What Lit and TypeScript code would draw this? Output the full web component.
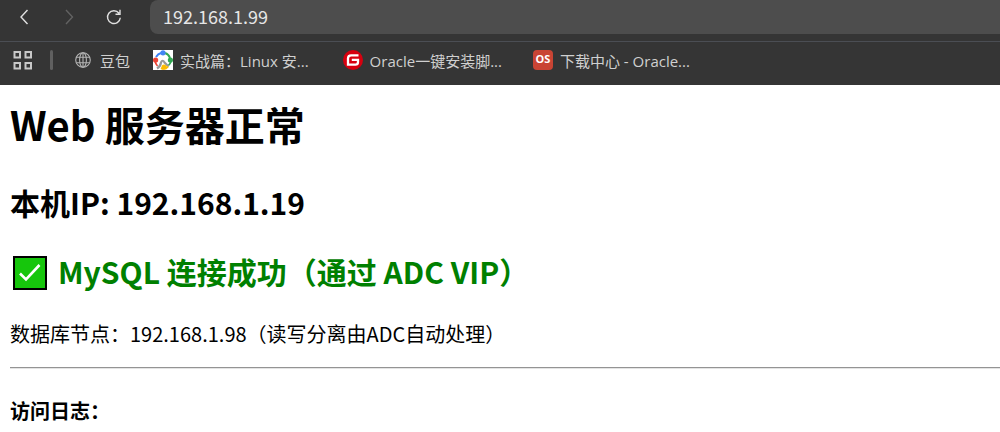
import { LitElement, html, css, svg } from "lit";
import { customElement } from "lit/decorators.js";

const globeIcon = svg`<svg width="16" height="16" viewBox="0 0 16 16" fill="none" stroke="#b4b4b4" stroke-width="1.1">
  <circle cx="8" cy="8" r="7.3"/><ellipse cx="8" cy="8" rx="3.4" ry="7.3"/><path d="M8 .7v14.6M1.3 5.2h13.4M1.3 10.8h13.4"/></svg>`;

const peopleIcon = svg`<svg width="20" height="20" viewBox="0 0 20 20" fill="none">
  <path fill="#fff" d="M0 0h20v20H0z"/>
  <path d="M3 7Q5 3.600 8 3" stroke="#3b82f6" stroke-width="2"/>
  <path d="M12 3Q15.500 4 17 8" stroke="#34a853" stroke-width="2"/>
  <circle cx="10" cy="2.800" r="2.600" fill="#4285f4"/>
  <circle cx="2.600" cy="10" r="2.600" fill="#ea4335"/><path d="M2 11q.5 3 2.500 5" stroke="#ea4335" stroke-width="1.600"/>
  <circle cx="17.400" cy="10" r="2.600" fill="#34a853"/><path d="M18 11q-.5 3-3 5" stroke="#34a853" stroke-width="1.600"/>
  <path d="M4 18.500q3.500-2 4-6 1.500-3.500 3.500 0l4 4" stroke="#999" stroke-width="2.200"/>
  <path d="M8 18q4 2 7-1.500" stroke="#fbbc05" stroke-width="2"/><circle cx="11" cy="17" r="2.500" fill="#fbbc05"/></svg>`;

const giteeIcon = svg`<svg width="20" height="20" viewBox="0 0 20 20" fill="none">
  <circle cx="10" cy="10" r="10" fill="#d7000f"/>
  <path d="M15.500 5.300H8.200Q5 5.300 5 8.500v6.200h7.300q2.700 0 2.700-2.700v-2.200H8.800" stroke="#fff" stroke-width="2.300"/></svg>`;

const osIcon = html`<span class="os">OS</span>`;

const bookmarks = [
  { label: "豆包", icon: globeIcon, kind: "small" },
  { label: "实战篇：Linux 安...", icon: peopleIcon, kind: "" },
  { label: "Oracle一键安装脚...", icon: giteeIcon, kind: "wide" },
  { label: "下载中心 - Oracle...", icon: osIcon, kind: "" },
];

@customElement("browser-chrome")
export class BrowserChrome extends LitElement {
  static styles = css`
    :host { display: block; background: #353535; color: #d0d0d0; }
    .toolbar { display: flex; align-items: flex-start; padding: 0 0 7px 8px; border-bottom: 1px solid #4b4e54; }
    button { display: grid; place-items: center; border: 0; padding: 0; background: none; width: 32px; height: 34px; }
    svg { display: block; }
    .nav { display: flex; gap: 13px; margin-right: 20px; }
    .address { flex: 1; min-width: 0; box-sizing: border-box; height: 34px; border: 0; outline: 0; border-radius: 8px 0 0 8px;
      padding: 0 13px 2px; background: #4d4d4d; color: #e6e6e6; font: 18px "Noto Sans CJK SC", sans-serif; }
    .bookmarks { display: flex; align-items: center; height: 36px; padding: 0 0 7px 13px; white-space: nowrap; overflow: hidden; }
    .apps { width: 20px; height: 20px; }
    .divider { width: 3px; height: 20px; border-radius: 2px; background: #606060; margin: 0 22px 0 17px; }
    .list { display: flex; gap: 23px; }
    a { display: flex; align-items: center; gap: 7px; color: inherit; text-decoration: none;
      font: 15px/24px "Open Sans", "Noto Sans CJK SC", sans-serif; }
    .label { padding-top: 2px; }
    .small { gap: 9px; }
    .wide { margin: 0 8px 0 11px; }
    .os { display: grid; place-items: center; box-sizing: border-box; width: 20px; height: 20px; padding-bottom: 2px;
      border-radius: 4px; background: #c94434; color: #fff; font: bold 11px/18px "Open Sans", sans-serif; }
  `;

  render() {
    return html`
      <div class="toolbar">
        <div class="nav">
          <button aria-label="返回"><svg width="16" height="16" viewBox="0 0 16 16" fill="none" stroke="#e0e0e0" stroke-width="1.400"><path d="M11.500 1 5 8l6.500 7"/></svg></button>
          <button aria-label="前进" disabled><svg width="16" height="16" viewBox="0 0 16 16" fill="none" stroke="#626262" stroke-width="1.400"><path d="m5 1 6.500 7L5 15"/></svg></button>
          <button aria-label="刷新"><svg width="16" height="16" viewBox="0 0 16 16" fill="none" stroke="#e0e0e0" stroke-width="1.400"><path d="M14.300 8.700A6.400 6.400 0 1 1 13 4.200M14 .8v4.400H9.500"/></svg></button>
        </div>
        <input class="address" aria-label="地址栏" value="192.168.1.99">
      </div>
      <nav class="bookmarks">
        <button class="apps" aria-label="应用"><svg width="20" height="20" viewBox="0 0 20 20" fill="none" stroke="#c8c8c8" stroke-width="2"><path d="M1.500 2H7v5.500H1.500zM12.500 2H18v5.500h-5.500zM1.500 13H7v5.500H1.500zM12.500 13H18v5.500h-5.500z"/></svg></button>
        <span class="divider"></span>
        <div class="list">
          ${bookmarks.map((b) => html`<a class=${b.kind} href="#">${b.icon}<span class="label">${b.label}</span></a>`)}
        </div>
      </nav>`;
  }
}

@customElement("app-root")
export class AppRoot extends LitElement {
  static styles = css`
    :host { display: block; background: #fff; color: #000; font: 20px/30px "Noto Sans CJK SC", sans-serif; }
    main { padding: 9px 0 6px 10px; }
    h1 { margin: 0 0 26px; font-size: 40px; line-height: 60px; }
    h2 { margin: 0 0 25px; font-size: 30px; line-height: 44px; }
    .ok { display: flex; align-items: center; gap: 11px; margin-bottom: 26px; color: #008000; }
    .ok svg { display: block; margin: 4px 0 0 3px; }
    p { margin: 0 0 18px; }
    hr { margin: 0 0 27px; border: 0; border-top: 1px solid #949494; border-bottom: 1px solid #e4e4e4; }
    h4 { margin: 0; font-size: 20px; line-height: 30px; }
  `;

  render() {
    return html`
      <browser-chrome></browser-chrome>
      <main>
        <h1>Web 服务器正常</h1>
        <h2>本机IP: 192.168.1.19</h2>
        <h2 class="ok">
          <svg width="34" height="34" viewBox="0 0 34 34" role="img" aria-label="成功"><path fill="#16c60c" stroke="#000" stroke-width="2" d="M1 1h32v32H1z"/><path d="m7 17.500 6 6L26.500 9" fill="none" stroke="#fff" stroke-width="2.600"/></svg>
          <span>MySQL 连接成功（通过 ADC VIP）</span>
        </h2>
        <p>数据库节点：192.168.1.98（读写分离由ADC自动处理）</p>
        <hr>
        <h4>访问日志：</h4>
      </main>`;
  }
}
